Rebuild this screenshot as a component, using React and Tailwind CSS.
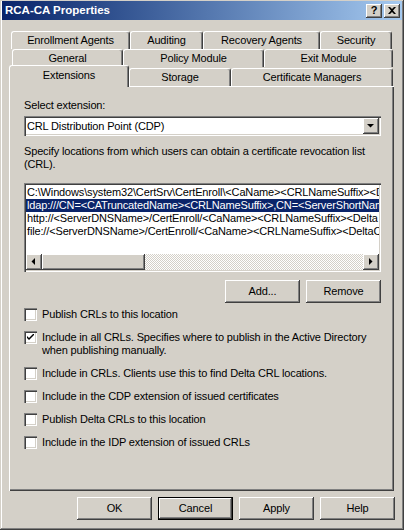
import React from 'react';

const raised = 'shadow-[inset_-1px_-1px_#404040,inset_1px_1px_#ffffff,inset_-2px_-2px_#808080]';
const sunken = 'shadow-[inset_1px_1px_#808080,inset_2px_2px_#404040,inset_-1px_-1px_#ffffff,inset_-2px_-2px_#d4d0c8]';

const Tab = ({ label, w, selected }) => (
  <div
    className={`relative flex items-center justify-center shrink-0 rounded-t-[3px] bg-[#d4d0c8] border-t border-l border-white border-r border-r-[#404040] shadow-[inset_-1px_0_#808080] ${
      selected ? 'z-10 h-[22px] mb-[-1px] pb-[3px]' : 'h-[18px]'
    }`}
    style={{ width: w }}
  >
    {label}
  </div>
);

const Btn = ({ children, def }) => (
  <div
    className={`w-[75px] h-[23px] flex items-center justify-center bg-[#d4d0c8] ${raised} ${
      def ? 'outline outline-1 outline-black -outline-offset-1 shadow-[inset_-2px_-2px_#404040,inset_2px_2px_#ffffff,inset_-3px_-3px_#808080]' : ''
    }`}
  >
    {children}
  </div>
);

const Check = ({ checked, children }) => (
  <div className="flex items-start">
    <div className={`w-[13px] h-[13px] shrink-0 bg-white ${sunken} flex items-center justify-center`}>
      {checked && (
        <svg width="7" height="7" viewBox="0 0 7 7">
          <path d="M0 2 L0 4 L2 6 L7 1 L7 -1 L2 4 Z" fill="#000" />
        </svg>
      )}
    </div>
    <div className="ml-[5px] leading-[13px]">{children}</div>
  </div>
);

const Arrow = ({ dir }) => (
  <svg width="8" height="8" viewBox="0 0 8 8">
    {dir === 'down' && <path d="M0 2 H7 L3.5 5.5 Z" fill="#000" />}
    {dir === 'left' && <path d="M5 0 V7 L1.5 3.5 Z" fill="#000" />}
    {dir === 'right' && <path d="M2 0 V7 L5.5 3.5 Z" fill="#000" />}
  </svg>
);

// only the visible start of each path, the list is scrolled to the left
const locations = [
  'C:\\Windows\\system32\\CertSrv\\CertEnroll\\<CaName><CRLNameSuffix><D',
  'ldap:///CN=<CATruncatedName><CRLNameSuffix>,CN=<ServerShortNam',
  'http://<ServerDNSName>/CertEnroll/<CaName><CRLNameSuffix><Delta',
  'file://<ServerDNSName>/CertEnroll/<CaName><CRLNameSuffix><DeltaC',
];

export default function App() {
  return (
    <div className="w-[404px] h-[530px] overflow-hidden bg-[#d4d0c8] text-black text-[11px] tracking-[-0.15px] font-[family-name:'Liberation_Sans',Arial,sans-serif] shadow-[inset_-1px_-1px_#404040,inset_1px_1px_#d4d0c8,inset_-2px_-2px_#808080,inset_2px_2px_#ffffff]">
      {/* Title bar */}
      <div className="mx-[2px] mt-[1px] h-[19px] flex items-center justify-between bg-linear-to-r from-[#0a246a] to-[#a6caf0] pl-[3px] pr-[2px]">
        <span className="text-white font-bold text-[11.5px] tracking-normal leading-none">RCA-CA Properties</span>
        <div className="flex gap-[2px]">
          <div className={`w-[16px] h-[14px] bg-[#d4d0c8] ${raised} flex items-center justify-center font-bold text-[11px] leading-none pb-[1px]`}>?</div>
          <div className={`w-[16px] h-[14px] bg-[#d4d0c8] ${raised} flex items-center justify-center pb-[1px]`}>
            <svg width="8" height="7" viewBox="0 0 8 7">
              <path d="M0 0 H2 L4 2 L6 0 H8 L5 3.5 L8 7 H6 L4 5 L2 7 H0 L3 3.5 Z" fill="#000" />
            </svg>
          </div>
        </div>
      </div>

      {/* Tabs */}
      <div className="mt-[11px]">
        <div className="flex h-[18px] pl-[11px]">
          <Tab label="Enrollment Agents" w={119} />
          <Tab label="Auditing" w={73} />
          <Tab label="Recovery Agents" w={117} />
          <Tab label="Security" w={72} />
        </div>
        <div className="flex h-[19px] pl-[12px]">
          <Tab label="General" w={111} />
          <Tab label="Policy Module" w={141} />
          <Tab label="Exit Module" w={129} />
        </div>
        <div className="flex items-end h-[18px] pl-[9px]">
          <Tab label="Extensions" w={120} selected />
          <Tab label="Storage" w={102} />
          <Tab label="Certificate Managers" w={162} />
        </div>
      </div>

      {/* Panel */}
      <div className="ml-[9px] w-[385px] h-[405px] pt-[13px] pl-[15px] pr-[13px] shadow-[inset_1px_1px_#ffffff,inset_-1px_-1px_#404040,inset_-2px_-2px_#808080]">
        <div className="leading-[13px]">Select extension:</div>
        <div className={`mt-[4px] h-[20px] bg-white ${sunken} flex items-center justify-between pl-[3px] pr-[2px]`}>
          <span>CRL Distribution Point (CDP)</span>
          <div className={`w-[16px] h-[16px] bg-[#d4d0c8] ${raised} flex items-center justify-center`}>
            <Arrow dir="down" />
          </div>
        </div>
        <div className="mt-[9px] leading-[13px]">
          Specify locations from which users can obtain a certificate revocation list
          <br />
          (CRL).
        </div>

        {/* Location list */}
        <div className={`mt-[12px] h-[89px] bg-white ${sunken} p-[2px] flex flex-col`}>
          <div className="flex-1 overflow-hidden pt-[1px]">
            {locations.map((loc, i) => (
              <div
                key={i}
                className={`h-[13px] leading-[13px] pl-[1px] whitespace-nowrap overflow-hidden ${
                  i === 1 ? 'bg-[#0a246a] text-white' : ''
                }`}
              >
                {loc}
              </div>
            ))}
          </div>
          <div className="h-[16px] flex">
            <div className={`w-[16px] h-[16px] bg-[#d4d0c8] ${raised} flex items-center justify-center`}>
              <Arrow dir="left" />
            </div>
            <div className={`w-[103px] h-[16px] bg-[#d4d0c8] ${raised}`} />
            <div className="flex-1 h-[16px] bg-[image:repeating-conic-gradient(#d4d0c8_0%_25%,#ffffff_0%_50%)] bg-[length:2px_2px]" />
            <div className={`w-[16px] h-[16px] bg-[#d4d0c8] ${raised} flex items-center justify-center`}>
              <Arrow dir="right" />
            </div>
          </div>
        </div>

        <div className="mt-[8px] flex justify-end gap-[6px]">
          <Btn>Add...</Btn>
          <Btn>Remove</Btn>
        </div>

        <div className="mt-[5px] flex flex-col gap-[10px]">
          <Check>Publish CRLs to this location</Check>
          <Check checked>
            Include in all CRLs. Specifies where to publish in the Active Directory
            <br />
            when publishing manually.
          </Check>
          <Check>Include in CRLs. Clients use this to find Delta CRL locations.</Check>
          <Check>Include in the CDP extension of issued certificates</Check>
          <Check>Publish Delta CRLs to this location</Check>
          <Check>Include in the IDP extension of issued CRLs</Check>
        </div>
      </div>

      {/* Dialog buttons */}
      <div className="mt-[6px] pr-[9px] flex justify-end gap-[6px]">
        <Btn>OK</Btn>
        <Btn def>Cancel</Btn>
        <Btn>Apply</Btn>
        <Btn>Help</Btn>
      </div>
    </div>
  );
}
